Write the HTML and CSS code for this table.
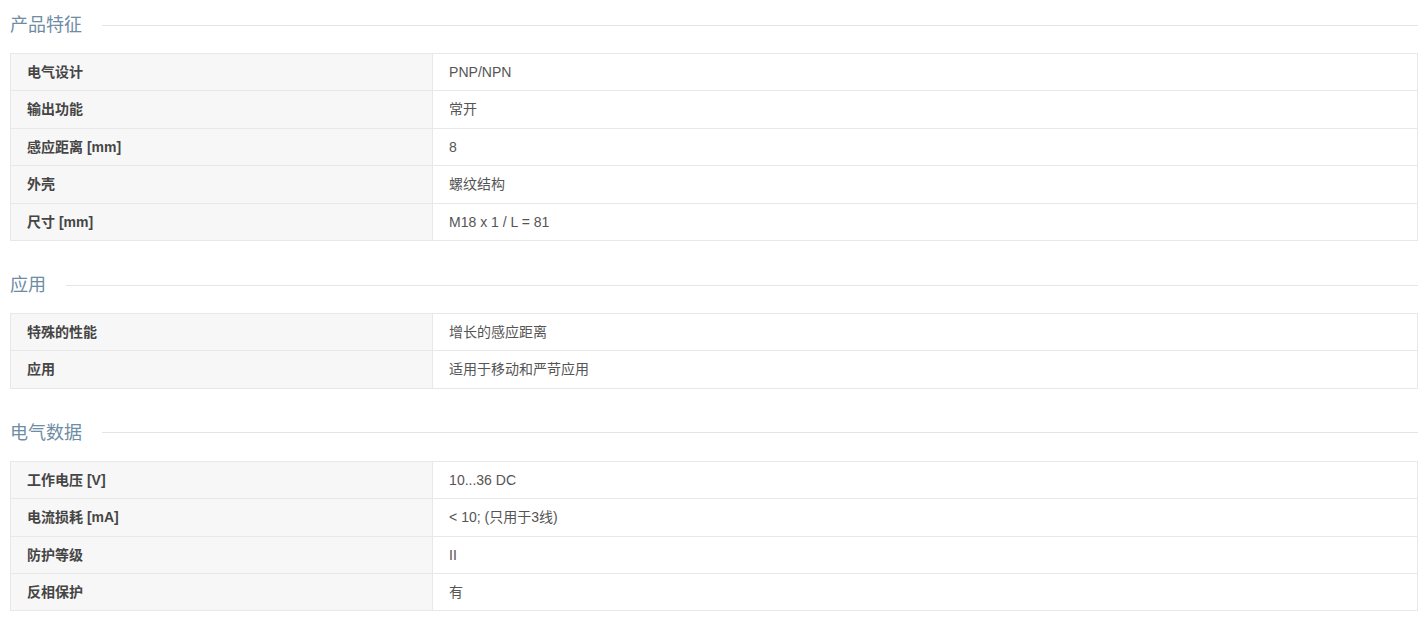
FILE: index.html
```html
<!DOCTYPE html>
<html lang="zh-CN">
<head>
<meta charset="utf-8">
<title>产品特征</title>
<link rel="stylesheet" href="styles.css">
</head>
<body>
<div class="page">
  <section class="section">
    <h2 class="section-title"><span>产品特征</span></h2>
    <table class="spec">
      <colgroup><col class="label-col"><col></colgroup>
      <tr><th>电气设计</th><td>PNP/NPN</td></tr>
      <tr><th>输出功能</th><td>常开</td></tr>
      <tr><th>感应距离 [mm]</th><td>8</td></tr>
      <tr><th>外壳</th><td>螺纹结构</td></tr>
      <tr><th>尺寸 [mm]</th><td>M18 x 1 / L = 81</td></tr>
    </table>
  </section>
  <section class="section">
    <h2 class="section-title"><span>应用</span></h2>
    <table class="spec">
      <colgroup><col class="label-col"><col></colgroup>
      <tr><th>特殊的性能</th><td>增长的感应距离</td></tr>
      <tr><th>应用</th><td>适用于移动和严苛应用</td></tr>
    </table>
  </section>
  <section class="section">
    <h2 class="section-title"><span>电气数据</span></h2>
    <table class="spec">
      <colgroup><col class="label-col"><col></colgroup>
      <tr><th>工作电压 [V]</th><td>10...36 DC</td></tr>
      <tr><th>电流损耗 [mA]</th><td>&lt; 10; (只用于3线)</td></tr>
      <tr><th>防护等级</th><td>II</td></tr>
      <tr><th>反相保护</th><td>有</td></tr>
    </table>
  </section>
</div>
</body>
</html>
```

FILE: styles.css
```css
html, body {
  margin: 0;
  padding: 0;
  background: #ffffff;
}

body {
  font-family: "Liberation Sans", "Noto Sans CJK SC", sans-serif;
  font-size: 14px;
  color: #555555;
}

.page {
  padding: 12px 8px 0 10px;
}

.section {
  margin-bottom: 31px;
}

.section-title {
  display: flex;
  align-items: center;
  gap: 20px;
  margin: 0 0 15px 0;
  font-size: 18px;
  font-weight: normal;
  line-height: 26px;
  color: #6e8ca4;
}

.section-title::after {
  content: "";
  flex: 1;
  height: 1px;
  background: #e5e5e5;
}

.spec {
  width: 100%;
  border-collapse: collapse;
  table-layout: fixed;
}

.label-col {
  width: 30%;
}

.spec th,
.spec td {
  border: 1px solid #e8e8e8;
  padding: 10px 16px;
  line-height: 16.4px;
  text-align: left;
  vertical-align: middle;
}

.spec th {
  background: #f7f7f7;
  font-weight: bold;
  color: #454545;
}

.spec td {
  color: #555555;
  background: #ffffff;
}
```
